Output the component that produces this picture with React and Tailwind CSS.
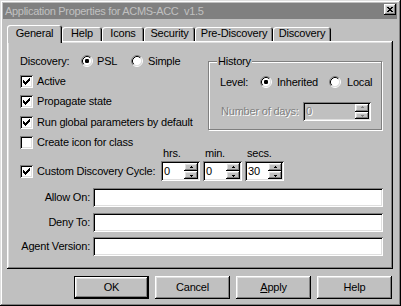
import React from "react";

const raised =
  "shadow-[inset_-1px_-1px_0_#000,inset_1px_1px_0_#fff,inset_-2px_-2px_0_#808080,inset_2px_2px_0_#dfdfdf]";
const sunken =
  "shadow-[inset_1px_1px_0_#808080,inset_-1px_-1px_0_#fff,inset_2px_2px_0_#000,inset_-2px_-2px_0_#dfdfdf]";

function Radio({ checked }) {
  return (
    <svg width="12" height="12" viewBox="0 0 12 12" className="shrink-0">
      <circle cx="6" cy="6" r="4.5" fill="#fff" />
      <path d="M2.11 9.89A5.5 5.5 0 0 1 9.89 2.11" stroke="#808080" fill="none" />
      <path d="M9.89 2.11A5.5 5.5 0 0 1 2.11 9.89" stroke="#fff" fill="none" />
      <path d="M2.82 9.18A4.5 4.5 0 0 1 9.18 2.82" stroke="#000" fill="none" />
      <path d="M9.18 2.82A4.5 4.5 0 0 1 2.82 9.18" stroke="#dfdfdf" fill="none" />
      {checked && <rect x="4" y="4" width="4" height="4" rx="1.2" fill="#000" />}
    </svg>
  );
}

const CHECK = [
  [6, 0, 1], [5, 1, 2], [0, 2, 1], [4, 2, 3], [0, 3, 2], [3, 3, 3],
  [0, 4, 5], [1, 5, 3], [2, 6, 1],
];

function Check({ checked }) {
  return (
    <div className={`w-[13px] h-[13px] shrink-0 bg-white ${sunken} flex items-center justify-center`}>
      {checked && (
        <svg width="7" height="7" viewBox="0 0 7 7" shapeRendering="crispEdges">
          {CHECK.map(([x, y, w], i) => (
            <rect key={i} x={x} y={y} width={w} height="1" fill="#000" />
          ))}
        </svg>
      )}
    </div>
  );
}

function Arrow({ up, color = "#000" }) {
  return (
    <svg width="5" height="3" viewBox="0 0 5 3" shapeRendering="crispEdges">
      {up ? (
        <>
          <rect x="2" y="0" width="1" height="1" fill={color} />
          <rect x="1" y="1" width="3" height="1" fill={color} />
        </>
      ) : (
        <>
          <rect x="1" y="1" width="3" height="1" fill={color} />
          <rect x="2" y="2" width="1" height="1" fill={color} />
        </>
      )}
    </svg>
  );
}

function Spinner({ value, className, disabled, h = "h-[20px]" }) {
  const arrowColor = disabled ? "#808080" : "#000";
  return (
    <div className={`${className} ${h} ${sunken} ${disabled ? "bg-[#c0c0c0]" : "bg-white"} flex p-[2px]`}>
      <div
        className={`flex-1 flex items-center pl-[1px] ${
          disabled ? "text-[#808080] [text-shadow:1px_1px_0_#fff]" : "text-black"
        }`}
      >
        {value}
      </div>
      <div className="flex flex-col w-[14px]">
        <div className={`flex-1 ${raised} bg-[#c0c0c0] flex items-center justify-center`}>
          <Arrow up color={arrowColor} />
        </div>
        <div className={`flex-1 ${raised} bg-[#c0c0c0] flex items-center justify-center`}>
          <Arrow color={arrowColor} />
        </div>
      </div>
    </div>
  );
}

function Tab({ children, w, selected }) {
  if (selected) {
    return (
      <div
        className={`${w} h-[18px] -mb-[2px] relative z-10 bg-[#c0c0c0] rounded-t-[3px] shadow-[inset_1px_1px_0_#fff,inset_-1px_0_0_#000,inset_-2px_0_0_#808080] flex justify-center pt-[3px]`}
      >
        {children}
      </div>
    );
  }
  return (
    <div
      className={`${w} h-[14px] bg-[#c0c0c0] rounded-t-[3px] shadow-[inset_1px_1px_0_#fff,inset_-1px_0_0_#000,inset_-2px_0_0_#808080] flex justify-center pt-[1px]`}
    >
      {children}
    </div>
  );
}

function Btn({ children, def }) {
  if (def) {
    return (
      <div className="w-[75px] h-[23px] border border-black flex">
        <div className={`flex-1 ${raised} bg-[#c0c0c0] flex items-center justify-center`}>{children}</div>
      </div>
    );
  }
  return (
    <div className={`w-[75px] h-[23px] ${raised} bg-[#c0c0c0] flex items-center justify-center`}>
      {children}
    </div>
  );
}

const CLOSE = [
  [0, 0, 2], [4, 0, 2], [1, 1, 4], [2, 2, 2], [1, 3, 4], [0, 4, 2], [4, 4, 2],
];

function CheckRow({ checked, label, h }) {
  return (
    <div className={`flex items-center ${h}`}>
      <Check checked={checked} />
      <span className="ml-[4px]">{label}</span>
    </div>
  );
}

function Field({ label, className }) {
  return (
    <div className={`flex items-center ${className}`}>
      <div className="w-[70px] text-right">{label}</div>
      <div className={`ml-[3px] w-[290px] h-[19px] bg-white ${sunken}`} />
    </div>
  );
}

export default function App() {
  return (
    <div
      className={`w-[401px] h-[306px] bg-[#c0c0c0] text-black text-[11px] leading-none tracking-[-0.2px] [font-family:'Liberation_Sans',Arial,sans-serif] shadow-[inset_-1px_-1px_0_#000,inset_1px_1px_0_#dfdfdf,inset_-2px_-2px_0_#808080,inset_2px_2px_0_#fff] p-[3px] pr-[4px] flex flex-col overflow-hidden`}
    >
      {/* Title bar */}
      <div className="h-[16px] bg-[#808080] flex items-start pl-[2px] pr-[1px]">
        <span className="self-center whitespace-pre text-[#c0c0c0] text-[11px] tracking-[-0.3px]">
          Application Properties for ACMS-ACC  v1.5
        </span>
        <div className={`ml-auto mt-[1px] w-[12px] h-[11px] ${raised} bg-[#c0c0c0] flex items-center justify-center`}>
          <svg width="6" height="5" viewBox="0 0 6 5" shapeRendering="crispEdges">
            {CLOSE.map(([x, y, w], i) => (
              <rect key={i} x={x} y={y} width={w} height="1" fill="#000" />
            ))}
          </svg>
        </div>
      </div>

      {/* Tabs */}
      <div className="mt-[6px] h-[16px] flex items-end pl-[4px]">
        <Tab w="w-[55px]" selected>General</Tab>
        <Tab w="w-[40px]">Help</Tab>
        <Tab w="w-[42px]">Icons</Tab>
        <Tab w="w-[51px]">Security</Tab>
        <Tab w="w-[78px]">Pre-Discovery</Tab>
        <Tab w="w-[58px]">Discovery</Tab>
      </div>

      {/* Panel */}
      <div className={`ml-[4px] w-[386px] h-[228px] ${raised} bg-[#c0c0c0] pt-[10px] pl-[13px] flex flex-col`}>
        <div className="flex">
          <div className="w-[188px] flex flex-col">
            <div className="flex items-center h-[20px]">
              <span className="w-[61px]">Discovery:</span>
              <Radio checked />
              <span className="ml-[4px] w-[34px]">PSL</span>
              <Radio />
              <span className="ml-[5px]">Simple</span>
            </div>
            <CheckRow checked label="Active" h="h-[20px]" />
            <CheckRow checked label="Propagate state" h="h-[21px]" />
            <CheckRow checked label="Run global parameters by default" h="h-[20px]" />
            <CheckRow label="Create icon for class" h="h-[21px]" />
          </div>
          <div className="mt-[10px] w-[174px] h-[69px] relative border border-[#808080] shadow-[1px_1px_0_#fff,inset_1px_1px_0_#fff] pl-[11px] pt-[10px] flex flex-col">
            <span className="absolute -top-[6px] left-[8px] bg-[#c0c0c0] px-[1px]">History</span>
            <div className="flex items-center h-[20px]">
              <span className="w-[40px]">Level:</span>
              <Radio checked />
              <span className="ml-[5px] w-[52px]">Inherited</span>
              <Radio />
              <span className="ml-[6px]">Local</span>
            </div>
            <div className="mt-[10px] flex items-center h-[19px]">
              <span className="w-[83px] pl-[1px] text-[#808080] [text-shadow:1px_1px_0_#fff]">Number of days:</span>
              <Spinner value="0" className="w-[68px]" h="h-[19px]" disabled />
            </div>
          </div>
        </div>

        <div className="-mt-[7px] flex items-end">
          <div className="w-[141px] h-[20px] flex items-center">
            <Check checked />
            <span className="ml-[4px]">Custom Discovery Cycle:</span>
          </div>
          <div className="flex gap-[3px]">
            {[
              ["hrs.", "0"],
              ["min.", "0"],
              ["secs.", "30"],
            ].map(([l, v]) => (
              <div key={l} className="flex flex-col">
                <div className="h-[14px] pl-[2px] flex items-center">{l}</div>
                <Spinner value={v} className="mt-[1px] w-[39px]" />
              </div>
            ))}
          </div>
        </div>

        <Field label="Allow On:" className="mt-[7px]" />
        <Field label="Deny To:" className="mt-[6px]" />
        <Field label="Agent Version:" className="mt-[5px]" />
      </div>

      {/* Buttons */}
      <div className="mt-[7px] flex justify-end gap-[6px] pr-[5px]">
        <Btn def>OK</Btn>
        <Btn>Cancel</Btn>
        <Btn>
          <span>
            <span className="underline underline-offset-[1px]">A</span>pply
          </span>
        </Btn>
        <Btn>Help</Btn>
      </div>
    </div>
  );
}
